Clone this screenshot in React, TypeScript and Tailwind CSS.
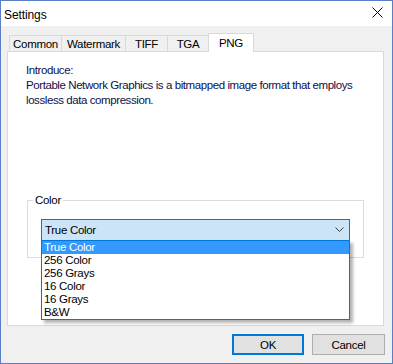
import React from "react";

const items = ["True Color", "256 Color", "256 Grays", "16 Color", "16 Grays", "B&W"];

export default function App() {
  return (
    <div
      className="w-[393px] h-[364px] border border-[#5a7fc5] bg-[#f0f0f0] flex flex-col text-[11.5px] tracking-[-0.3px] text-black overflow-hidden whitespace-nowrap"
      style={{ fontFamily: '"Liberation Sans", Arial, sans-serif' }}
    >
      {/* Title bar */}
      <div className="h-[25px] bg-white flex items-center justify-between pl-[3px] pr-[9px] shrink-0">
        <span className="text-[12px] tracking-[-0.1px] leading-[14px] mt-[2px]">Settings</span>
        <svg width="11" height="11" viewBox="0 0 11 11" className="mt-[-2px]">
          <path d="M0.5 0.5 L10.5 10.5 M10.5 0.5 L0.5 10.5" stroke="#000" strokeWidth="1" fill="none" />
        </svg>
      </div>

      {/* Tabs */}
      <div className="flex items-end mt-[7px] ml-[8px] h-[18px] shrink-0">
        <div className="w-[52px] h-[16px] border-l border-t border-[#d9d9d9] flex items-center justify-center leading-[14px] pt-[1px]">Common</div>
        <div className="w-[64px] h-[16px] border-l border-t border-[#d9d9d9] flex items-center justify-center leading-[14px] pt-[1px]">Watermark</div>
        <div className="w-[42px] h-[16px] border-l border-t border-[#d9d9d9] flex items-center justify-center leading-[14px] pt-[1px]">TIFF</div>
        <div className="w-[41px] h-[16px] border-l border-t border-[#d9d9d9] flex items-center justify-center leading-[14px] pt-[1px]">TGA</div>
        <div className="relative z-10 w-[46px] h-[19px] -mb-px bg-white border-l border-t border-r border-[#d9d9d9] flex items-start justify-center pt-[2px] leading-[14px]">PNG</div>
      </div>

      {/* Panel */}
      <div className="ml-[6px] w-[377px] h-[275px] border border-[#d9d9d9] bg-white pt-[11px] pl-[18px] shrink-0">
        <div className="text-[#0e0e4a] leading-[15px] tracking-[-0.42px]">
          <div>Introduce:</div>
          <div>Portable Network Graphics is a bitmapped image format that employs</div>
          <div>lossless data compression.</div>
        </div>

        {/* Group box */}
        <div className="relative mt-[92px] ml-[1px] w-[337px] h-[58px] border border-[#dcdcdc]">
          <span className="absolute left-[5px] top-[-8px] bg-white px-[2px] leading-[14px]">Color</span>
          <div className="relative mt-[18px] ml-[13px] w-[309px]">
            <div className="h-[22px] border border-[#0078d7] bg-[#cce4f7] flex items-center justify-between pl-[3px] pr-[5px]">
              <span className="leading-[14px]">True Color</span>
              <svg width="9" height="6" viewBox="0 0 9 6">
                <path d="M0.5 0.5 L4.5 4.5 L8.5 0.5" stroke="#3c3c3c" strokeWidth="1" fill="none" />
              </svg>
            </div>
            {/* Dropdown list */}
            <div className="absolute left-0 top-[21px] w-[309px] border border-[#0078d7] bg-white shadow-[3px_3px_3px_rgba(0,0,0,0.3)] z-20">
              {items.map((t, i) => (
                <div
                  key={t}
                  className={
                    i === 0
                      ? "h-[13px] bg-[#3399ff] text-white pl-[2px] leading-[13px]"
                      : "h-[13px] pl-[2px] leading-[13px]"
                  }
                >
                  {t}
                </div>
              ))}
            </div>
          </div>
        </div>
      </div>

      {/* Buttons */}
      <div className="flex justify-end gap-[8px] mt-[8px] pr-[7px]">
        <button className="w-[72px] h-[21px] border-2 border-[#0078d7] bg-[#e1e1e1] flex items-center justify-center leading-[14px]">
          OK
        </button>
        <button className="w-[73px] h-[21px] border border-[#adadad] bg-[#e1e1e1] flex items-center justify-center leading-[14px]">
          Cancel
        </button>
      </div>
    </div>
  );
}
